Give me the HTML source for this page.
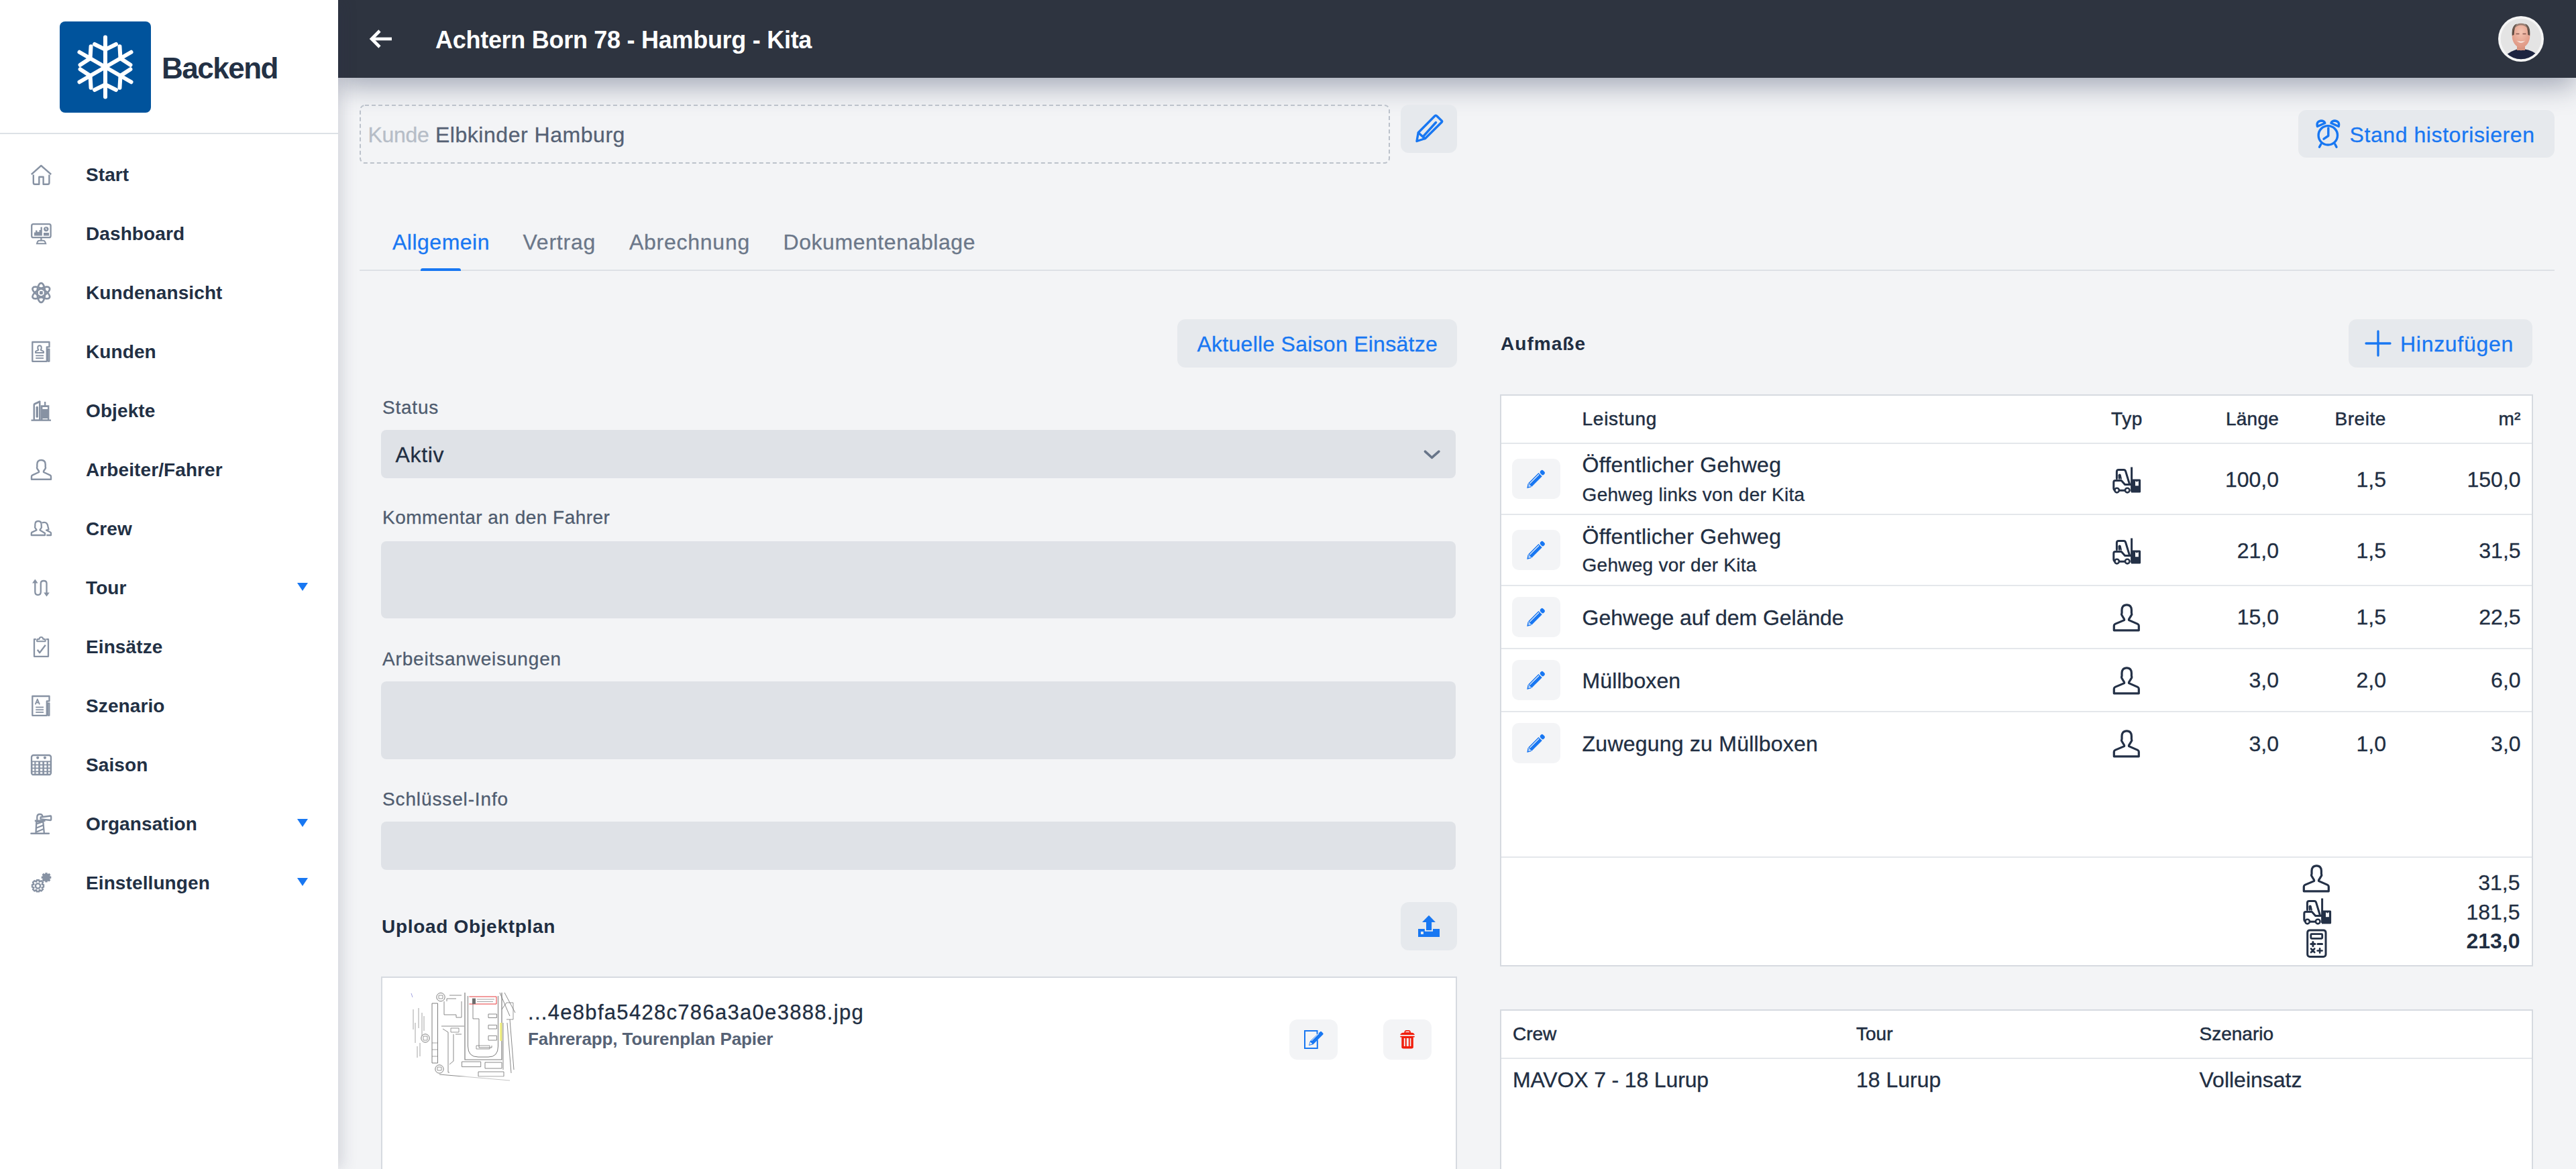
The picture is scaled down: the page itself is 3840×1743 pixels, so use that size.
<!DOCTYPE html>
<html><head><meta charset="utf-8">
<style>
*{box-sizing:border-box;margin:0;padding:0}
html,body{width:3840px;height:1743px;overflow:hidden;background:#f3f4f6;font-family:"Liberation Sans",sans-serif;color:#1f2a3c}
.a{position:absolute}
.t{position:absolute;line-height:1;white-space:nowrap}
#sb{position:absolute;left:0;top:0;width:504px;height:1743px;background:#fff;z-index:5;box-shadow:5px 0 22px rgba(40,50,80,.17)}
#hd{position:absolute;left:504px;top:0;width:3336px;height:116px;background:#2e3440;z-index:4;box-shadow:0 12px 40px rgba(40,52,85,.40)}
.nav{font-size:28px;font-weight:700;color:#223044;left:128px;letter-spacing:.1px}
.ic{position:absolute;left:36px;width:50px;height:50px}
.tri{position:absolute;left:443px;width:0;height:0;border-left:8.5px solid transparent;border-right:8.5px solid transparent;border-top:12px solid #1877f2}
.btn{position:absolute;background:#e6e9ed;border-radius:12px}
.inp{position:absolute;background:#dfe2e7;border-radius:8px;left:568px;width:1602px}
.lbl{font-size:28px;color:#4e5b6e;left:570px}
.blue{color:#1877f2}
</style></head>
<body>
<!-- SIDEBAR -->
<div id="sb">
  <div class="a" style="left:89px;top:32px;width:136px;height:136px;background:#00539c;border-radius:8px"></div>
  <svg class="a" style="left:89px;top:32px" width="136" height="136" viewBox="0 0 136 136">
    <g transform="translate(68,68)" stroke="#fff" stroke-width="6" stroke-linecap="round" fill="none">
      <g id="arm"><line x1="0" y1="0" x2="0" y2="-44.5"/><polyline points="-16,-34 0,-26 16,-34"/></g>
      <use href="#arm" transform="rotate(60)"/><use href="#arm" transform="rotate(120)"/><use href="#arm" transform="rotate(180)"/><use href="#arm" transform="rotate(240)"/><use href="#arm" transform="rotate(300)"/>
    </g>
  </svg>
  <div class="t" style="left:241px;top:79.5px;font-size:44px;font-weight:700;letter-spacing:-1.5px;color:#233145">Backend</div>
  <div class="a" style="left:0;top:198px;width:504px;height:2px;background:#dde1e6"></div>
  <!-- NAV -->
  <div class="t nav" style="top:246.8px">Start</div>
  <div class="t nav" style="top:334.8px">Dashboard</div>
  <div class="t nav" style="top:422.8px">Kundenansicht</div>
  <div class="t nav" style="top:510.8px">Kunden</div>
  <div class="t nav" style="top:598.8px">Objekte</div>
  <div class="t nav" style="top:686.8px">Arbeiter/Fahrer</div>
  <div class="t nav" style="top:774.8px">Crew</div>
  <div class="t nav" style="top:862.8px">Tour</div>
  <div class="t nav" style="top:950.8px">Einsätze</div>
  <div class="t nav" style="top:1038.8px">Szenario</div>
  <div class="t nav" style="top:1126.8px">Saison</div>
  <div class="t nav" style="top:1214.8px">Organsation</div>
  <div class="t nav" style="top:1302.8px">Einstellungen</div>
  <div class="tri" style="top:869px"></div>
  <div class="tri" style="top:1221px"></div>
  <div class="tri" style="top:1309px"></div>
  <svg class="ic" style="top:236px" viewBox="0 0 50 50"><g fill="none" stroke="#8792a3" stroke-width="2.4" stroke-linejoin="round"><path d="M10.8,24 L25.3,11 L40.2,24"/><path d="M13.8,24.5 V36.5 Q13.8,38.8 16,38.8 H22.3 V27.8 H28.6 V38.8 H35.2 Q37.4,38.8 37.4,36.5 V24.5"/></g></svg>
  <svg class="ic" style="top:324px" viewBox="0 0 50 50"><g fill="none" stroke="#8792a3" stroke-width="2.3"><rect x="11.2" y="10.2" width="28.4" height="20" rx="2.5"/><line x1="25.4" y1="30" x2="25.4" y2="35"/><path d="M19,39.2 Q20,34.8 22.5,34.8 H28.5 Q31,34.8 32.2,39.2 Z" stroke-width="2"/></g><g fill="#8792a3"><path d="M15,27.5 V22.5 H17 V19.5 H19.5 V21.8 H22.5 V19 H24.5 V14.5 H26.8 V27.5 Z"/><circle cx="32.8" cy="17.6" r="3.7"/><rect x="29" y="23" width="8" height="4.5"/></g><path d="M32.5,15.5 V18 H34" stroke="#fff" stroke-width="1" fill="none"/></svg>
  <svg class="ic" style="top:412px" viewBox="0 0 50 50"><g fill="none" stroke="#8792a3" stroke-width="2.7"><ellipse cx="25.3" cy="24.5" rx="5.8" ry="14.4"/><ellipse cx="25.3" cy="24.5" rx="5.8" ry="14.4" transform="rotate(60 25.3 24.5)"/><ellipse cx="25.3" cy="24.5" rx="5.8" ry="14.4" transform="rotate(-60 25.3 24.5)"/></g><rect x="23" y="22" width="4.8" height="5" rx="1" fill="#8792a3"/></svg>
  <svg class="ic" style="top:500px" viewBox="0 0 50 50"><g fill="none" stroke="#8792a3" stroke-width="2.3" stroke-linejoin="round"><path d="M12.3,10 H37.5 V17.3 H33.8 V38.8 H12.3 Z"/><path d="M35.6,20.5 H37.6 V38.8 H35.6 Z" stroke-width="1.8"/><path d="M23,15.2 Q20.4,15.2 20.3,17.8 V19.5 L21.3,21.8 L17.6,23.6 Q17,24 17,24.8 V26 H29 V24.8 Q29,24 28.3,23.6 L24.7,21.8 L25.7,19.5 V17.8 Q25.6,15.2 23,15.2 Z" stroke-width="2"/><line x1="17.2" y1="30.3" x2="29" y2="30.3" stroke-width="1.8"/><line x1="17.2" y1="34" x2="29" y2="34" stroke-width="1.8"/></g></svg>
  <svg class="ic" style="top:588px" viewBox="0 0 50 50"><g fill="#8792a3"><rect x="10.5" y="37.5" width="29.5" height="2.3"/><path d="M13.5,38 V15.5 Q13.5,13.5 15.5,12.8 L23,9.2 L24.5,10 V38 Z M16,37.5 H22 V13 L16,15.8 Z" fill-rule="evenodd"/><rect x="17.5" y="17.8" width="3.5" height="17" rx="1.5"/><path d="M24.5,16.3 H37.4 V38 H24.5 Z M27.4,19 V22 H35 V19 Z M27.5,36 V37.5 H35 V36 Z" fill-rule="evenodd"/><rect x="30" y="11" width="2.3" height="6"/></g></svg>
  <svg class="ic" style="top:676px" viewBox="0 0 50 50"><path d="M25.5,10 C21,10 19.3,13 19.3,16.5 V20.5 Q18.5,21.5 19.3,22.5 L22,26.5 V28 L12.5,32.3 Q11,33 11,34.5 V38.8 H40 V34.5 Q40,33 38.5,32.3 L29,28 V26.5 L31.7,22.5 Q32.5,21.5 31.7,20.5 V16.5 C31.7,13 30,10 25.5,10 Z" fill="none" stroke="#8792a3" stroke-width="2.4" stroke-linejoin="round"/></svg>
  <svg class="ic" style="top:764px" viewBox="0 0 50 50"><g fill="none" stroke="#8792a3" stroke-width="2.3" stroke-linejoin="round"><path d="M21,13 C17.5,13 16.3,15.5 16.3,18.3 V21 Q15.7,22 16.3,22.8 L18.4,25.8 V26.5 L11.7,29.6 Q10.8,30.1 10.8,31.2 V34 H31 V31 L23.6,26.5 V25.8 L25.7,22.8 Q26.3,22 25.7,21 V18.3 C25.7,15.5 24.5,13 21,13 Z"/><path d="M26.5,15.5 Q28,14.8 30,14.8 C33.5,14.8 35,17.5 35.5,21 L36.5,25.5 L33,26.5 L39,29.5 Q40,30 40,31 V34 H33.3"/></g></svg>
  <svg class="ic" style="top:852px" viewBox="0 0 50 50"><g fill="none" stroke="#8792a3" stroke-width="2.3" stroke-linejoin="round"><path d="M16.3,14 V30.5 Q16.3,35 20.5,35 Q24.8,35 24.8,30.5 V17.8 Q24.8,14 29.1,14 Q33.5,14 33.5,17.8 V35.5"/></g><g fill="#8792a3"><path d="M16.3,11.5 L12,17.5 H20.6 Z"/><path d="M33.5,37.5 L29.2,31.5 H37.8 Z"/></g></svg>
  <svg class="ic" style="top:940px" viewBox="0 0 50 50"><g fill="none" stroke="#8792a3" stroke-width="2.3" stroke-linejoin="round"><path d="M17.8,13.2 H15 V38.8 H36 V13.2 H32.8"/><path d="M19.8,13 H22.3 Q22.8,10 25.4,10 Q28,10 28.5,13 H31 Q31.5,13.5 31.5,14.5 V16.2 H19.2 V14.5 Q19.2,13.5 19.8,13 Z" stroke-width="2.1"/><polyline points="19.8,28.8 23.1,33.2 31.8,21.8"/></g></svg>
  <svg class="ic" style="top:1028px" viewBox="0 0 50 50"><g fill="none" stroke="#8792a3" stroke-width="2.3" stroke-linejoin="round"><path d="M12.3,10 H37.5 V17.3 H33.8 V38.8 H12.3 Z"/><path d="M35.6,20.5 H37.6 V38.8 H35.6 Z" stroke-width="1.8"/><path d="M16.6,22.3 L19.8,14.5 L23,22.3 M17.8,19.5 H21.8" stroke-width="1.8"/><line x1="17.2" y1="26.5" x2="29" y2="26.5" stroke-width="1.8"/><line x1="17.2" y1="30.3" x2="29" y2="30.3" stroke-width="1.8"/><line x1="17.2" y1="34" x2="29" y2="34" stroke-width="1.8"/></g></svg>
  <svg class="ic" style="top:1116px" viewBox="0 0 50 50"><rect x="11" y="10" width="29" height="29.2" rx="3" fill="none" stroke="#8792a3" stroke-width="2.3"/><path d="M11,18.6 H40 V36 Q40,39.2 37,39.2 H14 Q11,39.2 11,36 Z" fill="#8792a3"/><g fill="#fff"><rect x="12.5" y="20.3" width="2.8" height="3.2"/><rect x="17.4" y="20.3" width="3.8" height="3.2"/><rect x="23.9" y="20.3" width="3.4" height="3.2"/><rect x="29.9" y="20.3" width="3.6" height="3.2"/><rect x="35.9" y="20.3" width="2.6" height="3.2"/><rect x="12.5" y="25.3" width="2.8" height="3.2"/><rect x="17.4" y="25.3" width="3.8" height="3.2"/><rect x="23.9" y="25.3" width="3.4" height="3.2"/><rect x="29.9" y="25.3" width="3.6" height="3.2"/><rect x="35.9" y="25.3" width="2.6" height="3.2"/><rect x="12.5" y="30.3" width="2.8" height="3.2"/><rect x="17.4" y="30.3" width="3.8" height="3.2"/><rect x="23.9" y="30.3" width="3.4" height="3.2"/><rect x="29.9" y="30.3" width="3.6" height="3.2"/><rect x="35.9" y="30.3" width="2.6" height="3.2"/><rect x="12.5" y="35.3" width="2.8" height="2.4"/><rect x="17.4" y="35.3" width="3.8" height="2.4"/><rect x="23.9" y="35.3" width="3.4" height="2.4"/><rect x="29.9" y="35.3" width="3.6" height="2.4"/><rect x="35.9" y="35.3" width="2.6" height="2.4"/></g><g fill="#8792a3"><circle cx="20.2" cy="13.8" r="2.1"/><circle cx="30.9" cy="13.8" r="2.1"/></g></svg>
  <svg class="ic" style="top:1204px" viewBox="0 0 50 50"><g fill="none" stroke="#8792a3" stroke-width="2.3" stroke-linejoin="round"><line x1="10.5" y1="38.8" x2="36.8" y2="38.8" stroke-width="2.6" stroke-linecap="round"/><path d="M17.5,38 L18.3,21.3 H28.3 L29.8,38"/><path d="M15.8,19.8 H31.5" stroke-width="2.6"/><path d="M19.3,19.5 V14 Q19.5,10 23.3,10 Q27,10 27.5,13.3"/><path d="M24.5,14.5 L39.3,12.5 Q40.2,12.5 40.2,13.5 V18 Q40.2,19 39.3,19 L24.5,17.3 Z"/><path d="M18.5,24.5 L27.5,21.5 M18.3,30.5 L28.3,26.5 M18.2,36.5 L29,32"/></g></svg>
  <svg class="ic" style="top:1292px" viewBox="0 0 50 50"><g fill="none" stroke="#8792a3" stroke-width="2.4" stroke-linejoin="round"><path d="M18.8,20.3 H22.2 L22.8,22.8 L25.6,21.3 L28,23.7 L26.5,26.5 L29,27.2 V30.6 L26.5,31.3 L28,34 L25.6,36.4 L22.8,34.9 L22.2,37.4 H18.8 L18.2,34.9 L15.4,36.4 L13,34 L14.5,31.3 L12,30.6 V27.2 L14.5,26.5 L13,23.7 L15.4,21.3 L18.2,22.8 Z"/><circle cx="20.5" cy="29" r="3.6"/></g><path fill="#8792a3" d="M31.5,9.2 H34.5 L35,11.2 L37.3,10 L39.3,12 L38.1,14.3 L40.3,14.8 V17.8 L38.1,18.3 L39.3,20.6 L37.3,22.6 L35,21.4 L34.5,23.4 H31.5 L31,21.4 L28.7,22.6 L26.7,20.6 L27.9,18.3 L25.7,17.8 V14.8 L27.9,14.3 L26.7,12 L28.7,10 L31,11.2 Z"/></svg>
</div>
<!-- HEADER -->
<div id="hd">
  <svg class="a" style="left:44px;top:42px" width="40" height="32" viewBox="0 0 40 32">
    <g stroke="#fff" stroke-width="4.6" fill="none"><line x1="6" y1="16" x2="36" y2="16"/><polyline points="18,4 6,16 18,28"/></g>
  </svg>
</div>
<!--MAIN-->
<div id="mn" class="a" style="left:0;top:0;width:3840px;height:1743px;z-index:6">
<!-- avatar -->
<svg class="a" style="left:3722px;top:22px" width="72" height="72" viewBox="0 0 72 72">
  <defs><clipPath id="avc"><circle cx="36" cy="36" r="30.3"/></clipPath>
  <radialGradient id="fg" cx=".5" cy=".35" r=".6"><stop offset="0" stop-color="#f3c4b2"/><stop offset="1" stop-color="#e09a86"/></radialGradient></defs>
  <circle cx="36" cy="36" r="34" fill="#f5f5f5"/>
  <g clip-path="url(#avc)">
    <rect x="0" y="0" width="72" height="72" fill="#e4e4e4"/>
    <path d="M8,68 Q14,57 26,53 L30,51.5 Q36,55 42,51.5 L47,52.5 Q58,56 64,64 L66,72 H6 Z" fill="#1d2440"/>
    <rect x="30" y="45" width="12" height="8" fill="#d99580"/>
    <ellipse cx="36" cy="31" rx="13.3" ry="18" fill="url(#fg)"/>
    <path d="M22.8,31 Q21.5,16 30,13.5 Q26,18 25.5,30 Z M49.2,31 Q50.5,16 42,13.5 Q46,18 46.5,30 Z" fill="#5b4a40"/>
    <path d="M22.8,29 Q23,13 36,12.8 Q49,13 49.2,29 Q47,16 36,15.5 Q25,16 22.8,29 Z" fill="#7a6a60" opacity=".7"/>
    <path d="M29.5,38.5 Q36,44.5 42.5,38.5 Q36,41.5 29.5,38.5 Z" fill="#fff"/>
    <path d="M28.5,28.5 h5 M38.5,28.5 h5" stroke="#8a5a50" stroke-width="1.3"/>
  </g>
</svg>
<!-- kunde field -->
<svg class="a" style="left:536px;top:156px" width="1537" height="88"><rect x="1" y="1" width="1534" height="86" rx="7" fill="none" stroke="#bcc2cb" stroke-width="2" stroke-dasharray="6 4"/></svg>
<div class="btn" style="left:2088px;top:156px;width:84px;height:72px"></div>
<svg class="a" style="left:2100px;top:160px" width="60" height="60" viewBox="0 0 60 60"><g fill="none" stroke="#1877f2" stroke-width="3.4" stroke-linejoin="round" stroke-linecap="round"><path d="M41.6,12.8 L49.3,20.2 Q50.2,21.1 49.3,22 L24.5,46.5 L12,50.5 L14.2,37.8 L39,12.8 Q40.2,11.8 41.6,12.8 Z"/><line x1="14.5" y1="38" x2="23.8" y2="46.5"/><line x1="22" y1="43" x2="40.5" y2="22.5"/></g></svg>
<div class="btn" style="left:3426px;top:164px;width:382px;height:71px"></div>
<svg class="a" style="left:3440px;top:170px" width="60" height="60" viewBox="0 0 60 60"><g fill="none" stroke="#1877f2" stroke-width="3.4" stroke-linecap="round" stroke-linejoin="round"><circle cx="30.3" cy="31.8" r="14.2"/><polyline points="30.8,21 30.8,32.5 24,37.2"/><line x1="19.8" y1="45" x2="17.5" y2="49.2"/><line x1="40.8" y1="45" x2="43" y2="49.2"/><path d="M14.5,18.5 Q12.5,11 20,10 Q24.5,10 25.8,13.5 Z"/><path d="M46.2,18.5 Q48.2,11 40.7,10 Q36.2,10 34.9,13.5 Z"/></g></svg>
<!-- tabs -->
<div class="a" style="left:536px;top:402px;width:3272px;height:2px;background:#dde1e6"></div>
<div class="a" style="left:627px;top:400px;width:60px;height:4px;background:#1877f2;border-radius:3px 3px 0 0"></div>
<!-- left column -->
<div class="btn" style="left:1755px;top:476px;width:417px;height:72px"></div>
<div class="inp" style="top:641px;height:72px"></div>
<svg class="a" style="left:2110px;top:650px" width="50" height="50"><polyline points="14.4,23.1 24.4,32.3 34.9,23.1" fill="none" stroke="#687589" stroke-width="3.6" stroke-linecap="round" stroke-linejoin="round"/></svg>
<div class="inp" style="top:807px;height:115px"></div>
<div class="inp" style="top:1016px;height:116px"></div>
<div class="inp" style="top:1225px;height:72px"></div>
<div class="btn" style="left:2088px;top:1345px;width:84px;height:72px"></div>
<svg class="a" style="left:2105px;top:1355px" width="50" height="50" viewBox="0 0 50 50"><path fill="#1877f2" fill-rule="evenodd" d="M25,9.8 L34.9,19.9 H29.1 V31.9 H21 V19.9 H15 Z M9,30 H18.8 V33.8 H31 V30 H41 V41.9 H9 Z M13,34 V37.9 H16.9 V34 Z"/></svg>
<div class="a" style="left:568px;top:1456px;width:1604px;height:300px;background:#fff;border:2px solid #d6dae0"></div>
<svg class="a" style="left:610px;top:1475px" width="160" height="140" viewBox="0 0 160 140">
<rect x="0" y="0" width="160" height="140" fill="#fff"/>
<g fill="none" stroke="#7d7d7d" stroke-width="1">
<circle cx="47" cy="11.7" r="6.2"/><circle cx="24" cy="73" r="6.2"/><circle cx="45" cy="119" r="6.2"/>
<path d="M44,9 h6 v5 h-6 z M21,70 h6 v6 h-6 z M42,116 h6 v5 h-6z" stroke-width=".8"/>
<path d="M34,21 H42.5 V110 H34 Z" />
<path d="M34,80 H42.5 M34,90 H42.5 M34,100 H42.5" stroke-width=".7"/>
<path d="M6,30 V60 M9,50 V80 M14,28 V58 M19,35 V70 M22,40 V62 M12,85 V102 M16,80 V100" stroke="#9a9a9a" stroke-width=".9"/>
<path d="M83,5 V105 H138 V5" stroke-width="1.2"/>
<path d="M87.5,10 V85 Q87.5,101 103,101 H118 Q132.5,101 132.5,85 V10" stroke-width="1"/>
<path d="M95,22 V44 H104 V87 H123 V84" stroke-width=".9"/>
<path d="M118,37 h12.5 v5.5 h-12.5z M118,53.4 h12.5 v5.6 h-12.5z M118,69.4 h12.5 v6.6 h-12.5z" stroke-width=".9"/>
<path d="M100,84 h20 v5 h-20z" stroke-width=".8"/>
<path d="M52,18 V38 H70 V42 H78 V18 M60,9 H78 M56,18 V14 H70" stroke-width=".9"/>
<path d="M48,55 H82 M50,59 L58,64 V124 H60 M66,67 V107 L60,112 M69,67 H78" stroke-width=".9"/>
<path d="M62,58 h12 v6 h-12z" stroke-width=".8"/>
<path d="M78.5,108 H106.7 V115.6 H78.5 Z M113,109 H138 V118 H113 Z M103,123 H141 V130 H103 Z" stroke-width=".9"/>
<path d="M45,127 L150,136" stroke-width=".9"/>
<path d="M135,5 L150,40 M142,5 L158,35 M138,30 L145,20 M140,50 V120 M146,50 L152,125 M150,45 L156,120" stroke-width=".9"/>
<path d="M145,20 h10 v25 h-10" stroke-width=".8"/>
</g>
<path d="M89.4,11 H130 V22 H89.4" fill="none" stroke="#e5393b" stroke-width="1"/>
<rect x="94" y="13.6" width="5" height="8.4" fill="#6e6e6e"/>
<path d="M101,15 H127 M101,18.5 H125" stroke="#888" stroke-width=".8"/>
<rect x="135" y="50" width="3.5" height="27" fill="#f1f07a" opacity=".9"/>
<path d="M3,6 L5,12" stroke="#8b8bd8" stroke-width=".8"/>
<rect x="0" y="130" width="160" height="10" fill="#fff" opacity=".5"/>
</svg>

<div class="btn" style="left:1922px;top:1520px;width:72px;height:60px;background:#f3f4f6"></div>
<svg class="a" style="left:1935px;top:1525px" width="50" height="50" viewBox="0 0 50 50"><g fill="none" stroke="#1877f2" stroke-width="2"><path d="M28.5,16.8 V11.9 H10 V38 H28.8 V25.5"/></g><path fill="#1877f2" d="M33,13.3 Q34,12.3 35,13.3 L37.2,15.5 Q38.2,16.5 37.2,17.5 L22.5,32.2 L16,34 L17.8,27.5 Z"/><path fill="#f3f4f6" d="M18.3,28.6 L21.3,31.6 L17.2,32.8 Z"/><path stroke="#f3f4f6" stroke-width="1" d="M20,27 L31,16"/></svg>
<div class="btn" style="left:2062px;top:1520px;width:72px;height:60px;background:#f3f4f6"></div>
<svg class="a" style="left:2073px;top:1525px" width="50" height="50" viewBox="0 0 50 50"><g fill="#f11e0c"><path d="M20.3,15 Q20.3,11 23.5,11 H26.8 Q30,11 30,15 Z M22,14.3 H28.3 Q28.3,12.8 26.8,12.8 H23.5 Q22,12.8 22,14.3 Z" fill-rule="evenodd"/><path d="M14.2,18 Q15,15 19,14.8 H31.3 Q35.3,15 35.8,18 Z"/><rect x="14.2" y="19.8" width="21.6" height="1.8" rx=".9"/><path fill-rule="evenodd" d="M16.3,21 H33.8 V36.8 Q33.8,38.6 31,38.6 H19 Q16.3,38.6 16.3,36.8 Z M19.8,23 V35 H21.7 V23 Z M23.8,23 V35 H26.8 V23 Z M28.7,23 V35 H30.4 V23 Z"/></g></svg>
<!-- right column -->
<div class="btn" style="left:3501px;top:476px;width:274px;height:72px"></div>
<svg class="a" style="left:3522px;top:489px" width="46" height="46"><g stroke="#1877f2" stroke-width="3.3" stroke-linecap="round"><line x1="23" y1="5" x2="23" y2="41"/><line x1="5" y1="23" x2="41" y2="23"/></g></svg>
<div class="a" style="left:2236px;top:588px;width:1540px;height:853px;background:#fff;border:2px solid #d6dae0"></div>
<div class="a" style="left:2238px;top:660px;width:1536px;height:2px;background:#e4e7eb"></div>
<div class="a" style="left:2238px;top:766px;width:1536px;height:2px;background:#e4e7eb"></div>
<div class="a" style="left:2238px;top:872px;width:1536px;height:2px;background:#e4e7eb"></div>
<div class="a" style="left:2238px;top:966px;width:1536px;height:2px;background:#e4e7eb"></div>
<div class="a" style="left:2238px;top:1060px;width:1536px;height:2px;background:#e4e7eb"></div>
<div class="a" style="left:2238px;top:1277px;width:1536px;height:2px;background:#e4e7eb"></div>
<div class="btn" style="left:2254px;top:684px;width:72px;height:60px;background:#f3f4f6;border-radius:10px"></div><svg class="a" style="left:2260px;top:690px" width="60" height="50" viewBox="0 0 60 50"><g transform="translate(28.65,25.2) rotate(-45)" fill="#1877f2"><path d="M-17.8,0.3 L-12,-3.7 V3.7 Z"/><path fill="#f3f4f6" d="M-14.6,0.2 L-12.3,-1.9 V2.1 Z"/><rect x="-11.2" y="-3.7" width="21.8" height="7.4"/><rect x="-10" y="-2.3" width="19.5" height="1.1" fill="#f3f4f6"/><rect x="12" y="-3.7" width="6" height="7.4" rx="2.6"/></g></svg>
<div class="btn" style="left:2254px;top:790px;width:72px;height:60px;background:#f3f4f6;border-radius:10px"></div><svg class="a" style="left:2260px;top:796px" width="60" height="50" viewBox="0 0 60 50"><g transform="translate(28.65,25.2) rotate(-45)" fill="#1877f2"><path d="M-17.8,0.3 L-12,-3.7 V3.7 Z"/><path fill="#f3f4f6" d="M-14.6,0.2 L-12.3,-1.9 V2.1 Z"/><rect x="-11.2" y="-3.7" width="21.8" height="7.4"/><rect x="-10" y="-2.3" width="19.5" height="1.1" fill="#f3f4f6"/><rect x="12" y="-3.7" width="6" height="7.4" rx="2.6"/></g></svg>
<div class="btn" style="left:2254px;top:890px;width:72px;height:60px;background:#f3f4f6;border-radius:10px"></div><svg class="a" style="left:2260px;top:896px" width="60" height="50" viewBox="0 0 60 50"><g transform="translate(28.65,25.2) rotate(-45)" fill="#1877f2"><path d="M-17.8,0.3 L-12,-3.7 V3.7 Z"/><path fill="#f3f4f6" d="M-14.6,0.2 L-12.3,-1.9 V2.1 Z"/><rect x="-11.2" y="-3.7" width="21.8" height="7.4"/><rect x="-10" y="-2.3" width="19.5" height="1.1" fill="#f3f4f6"/><rect x="12" y="-3.7" width="6" height="7.4" rx="2.6"/></g></svg>
<div class="btn" style="left:2254px;top:984px;width:72px;height:60px;background:#f3f4f6;border-radius:10px"></div><svg class="a" style="left:2260px;top:990px" width="60" height="50" viewBox="0 0 60 50"><g transform="translate(28.65,25.2) rotate(-45)" fill="#1877f2"><path d="M-17.8,0.3 L-12,-3.7 V3.7 Z"/><path fill="#f3f4f6" d="M-14.6,0.2 L-12.3,-1.9 V2.1 Z"/><rect x="-11.2" y="-3.7" width="21.8" height="7.4"/><rect x="-10" y="-2.3" width="19.5" height="1.1" fill="#f3f4f6"/><rect x="12" y="-3.7" width="6" height="7.4" rx="2.6"/></g></svg>
<div class="btn" style="left:2254px;top:1078px;width:72px;height:60px;background:#f3f4f6;border-radius:10px"></div><svg class="a" style="left:2260px;top:1084px" width="60" height="50" viewBox="0 0 60 50"><g transform="translate(28.65,25.2) rotate(-45)" fill="#1877f2"><path d="M-17.8,0.3 L-12,-3.7 V3.7 Z"/><path fill="#f3f4f6" d="M-14.6,0.2 L-12.3,-1.9 V2.1 Z"/><rect x="-11.2" y="-3.7" width="21.8" height="7.4"/><rect x="-10" y="-2.3" width="19.5" height="1.1" fill="#f3f4f6"/><rect x="12" y="-3.7" width="6" height="7.4" rx="2.6"/></g></svg>
<svg class="a" style="left:3140.0px;top:690.0px" width="60" height="50" viewBox="0 0 60 50"><g fill="none" stroke="#243147" stroke-width="3" stroke-linejoin="round" stroke-linecap="round"><line x1="37.6" y1="6.5" x2="37.6" y2="43" stroke-linecap="butt"/><path d="M15.4,23.5 V13.3 Q15.4,10.4 18.3,10.4 H25.8 Q28,10.4 28.7,12.8 L34.3,31.3"/><path d="M19,23.5 L18.7,18.5 Q19.5,17 20.5,18.3 L21.7,23.5" stroke-width="2.4"/><path d="M36.5,32.6 H27.6 L22.3,26.6 H13.3 Q10.8,26.6 10.8,29.3 V38.2 Q10.8,40 12.2,40.6"/><line x1="19.5" y1="41.2" x2="27.5" y2="41.2"/><circle cx="15.6" cy="41.1" r="3.3" stroke-width="2.6"/><circle cx="31.2" cy="41.1" r="3.3" stroke-width="2.6"/></g><path fill="#243147" fill-rule="evenodd" d="M37,24.5 H49.6 Q51.1,24.5 51.1,26 V43 Q51.1,44.5 49.6,44.5 H37 Z M43,27.4 V34.2 H47.9 V27.4 H46.6 L45.4,28.8 L44.2,27.4 Z"/></svg>
<svg class="a" style="left:3140.0px;top:796.0px" width="60" height="50" viewBox="0 0 60 50"><g fill="none" stroke="#243147" stroke-width="3" stroke-linejoin="round" stroke-linecap="round"><line x1="37.6" y1="6.5" x2="37.6" y2="43" stroke-linecap="butt"/><path d="M15.4,23.5 V13.3 Q15.4,10.4 18.3,10.4 H25.8 Q28,10.4 28.7,12.8 L34.3,31.3"/><path d="M19,23.5 L18.7,18.5 Q19.5,17 20.5,18.3 L21.7,23.5" stroke-width="2.4"/><path d="M36.5,32.6 H27.6 L22.3,26.6 H13.3 Q10.8,26.6 10.8,29.3 V38.2 Q10.8,40 12.2,40.6"/><line x1="19.5" y1="41.2" x2="27.5" y2="41.2"/><circle cx="15.6" cy="41.1" r="3.3" stroke-width="2.6"/><circle cx="31.2" cy="41.1" r="3.3" stroke-width="2.6"/></g><path fill="#243147" fill-rule="evenodd" d="M37,24.5 H49.6 Q51.1,24.5 51.1,26 V43 Q51.1,44.5 49.6,44.5 H37 Z M43,27.4 V34.2 H47.9 V27.4 H46.6 L45.4,28.8 L44.2,27.4 Z"/></svg>
<svg class="a" style="left:3140.0px;top:890.0px" width="60" height="55" viewBox="0 0 60 55"><path d="M30.3,11.9 C25.2,11.9 23,15.3 23,19.5 V24 Q22.2,25.5 23,27.2 L26.6,33.3 V34.6 L13,40.4 Q11.3,41.2 11.3,43 V49.8 H48.3 V43 Q48.3,41.2 46.6,40.4 L33.5,34.6 V33.3 L37.3,27.2 Q38.2,25.5 37.4,24 V19.5 C37.4,15.3 35.4,11.9 30.3,11.9 Z" fill="none" stroke="#243147" stroke-width="3.2" stroke-linejoin="round"/></svg>
<svg class="a" style="left:3140.0px;top:984.0px" width="60" height="55" viewBox="0 0 60 55"><path d="M30.3,11.9 C25.2,11.9 23,15.3 23,19.5 V24 Q22.2,25.5 23,27.2 L26.6,33.3 V34.6 L13,40.4 Q11.3,41.2 11.3,43 V49.8 H48.3 V43 Q48.3,41.2 46.6,40.4 L33.5,34.6 V33.3 L37.3,27.2 Q38.2,25.5 37.4,24 V19.5 C37.4,15.3 35.4,11.9 30.3,11.9 Z" fill="none" stroke="#243147" stroke-width="3.2" stroke-linejoin="round"/></svg>
<svg class="a" style="left:3140.0px;top:1078.0px" width="60" height="55" viewBox="0 0 60 55"><path d="M30.3,11.9 C25.2,11.9 23,15.3 23,19.5 V24 Q22.2,25.5 23,27.2 L26.6,33.3 V34.6 L13,40.4 Q11.3,41.2 11.3,43 V49.8 H48.3 V43 Q48.3,41.2 46.6,40.4 L33.5,34.6 V33.3 L37.3,27.2 Q38.2,25.5 37.4,24 V19.5 C37.4,15.3 35.4,11.9 30.3,11.9 Z" fill="none" stroke="#243147" stroke-width="3.2" stroke-linejoin="round"/></svg>
<svg class="a" style="left:3423.0px;top:1279.4px" width="60" height="55" viewBox="0 0 60 55"><path d="M30.3,11.9 C25.2,11.9 23,15.3 23,19.5 V24 Q22.2,25.5 23,27.2 L26.6,33.3 V34.6 L13,40.4 Q11.3,41.2 11.3,43 V49.8 H48.3 V43 Q48.3,41.2 46.6,40.4 L33.5,34.6 V33.3 L37.3,27.2 Q38.2,25.5 37.4,24 V19.5 C37.4,15.3 35.4,11.9 30.3,11.9 Z" fill="none" stroke="#243147" stroke-width="3.2" stroke-linejoin="round"/></svg>
<svg class="a" style="left:3424.0px;top:1333.4px" width="60" height="50" viewBox="0 0 60 50"><g fill="none" stroke="#243147" stroke-width="3" stroke-linejoin="round" stroke-linecap="round"><line x1="37.6" y1="6.5" x2="37.6" y2="43" stroke-linecap="butt"/><path d="M15.4,23.5 V13.3 Q15.4,10.4 18.3,10.4 H25.8 Q28,10.4 28.7,12.8 L34.3,31.3"/><path d="M19,23.5 L18.7,18.5 Q19.5,17 20.5,18.3 L21.7,23.5" stroke-width="2.4"/><path d="M36.5,32.6 H27.6 L22.3,26.6 H13.3 Q10.8,26.6 10.8,29.3 V38.2 Q10.8,40 12.2,40.6"/><line x1="19.5" y1="41.2" x2="27.5" y2="41.2"/><circle cx="15.6" cy="41.1" r="3.3" stroke-width="2.6"/><circle cx="31.2" cy="41.1" r="3.3" stroke-width="2.6"/></g><path fill="#243147" fill-rule="evenodd" d="M37,24.5 H49.6 Q51.1,24.5 51.1,26 V43 Q51.1,44.5 49.6,44.5 H37 Z M43,27.4 V34.2 H47.9 V27.4 H46.6 L45.4,28.8 L44.2,27.4 Z"/></svg>
<svg class="a" style="left:3425.0px;top:1380.0px" width="60" height="55" viewBox="0 0 60 55"><g fill="none" stroke="#243147" stroke-width="3" stroke-linecap="round"><rect x="14.7" y="6.9" width="27.3" height="39.6" rx="3.5"/><rect x="19.8" y="12.7" width="16.9" height="6.6" rx="1" stroke-width="2.8"/><path d="M19.8,27.6 H26 M22.9,24.5 V30.7 M30,27.6 H36.6"/><path d="M20,34.5 L25.3,40 M25.3,34.5 L20,40 M29.6,37.5 H36.6 M33.1,34.2 V40.6" stroke-width="2.6"/></g></svg>
<div class="a" style="left:2236px;top:1505px;width:1540px;height:300px;background:#fff;border:2px solid #d6dae0"></div>
<div class="a" style="left:2238px;top:1577px;width:1536px;height:2px;background:#e4e7eb"></div>
<div class="t" style="left:649.0px;top:41.7px;font-size:36px;color:#ffffff;font-weight:700;letter-spacing:-0.28px">Achtern Born 78 - Hamburg - Kita</div>
<div class="t" style="left:548.5px;top:184.9px;font-size:32px;color:#b6bdc7;letter-spacing:-0.31px;-webkit-text-stroke:.3px #b6bdc7">Kunde</div>
<div class="t" style="left:649.0px;top:184.9px;font-size:32px;color:#556174;letter-spacing:0.53px;-webkit-text-stroke:.3px #556174">Elbkinder Hamburg</div>
<div class="t" style="left:585.0px;top:344.9px;font-size:32px;color:#1877f2;letter-spacing:0.50px;-webkit-text-stroke:.3px #1877f2">Allgemein</div>
<div class="t" style="left:779.5px;top:344.9px;font-size:32px;color:#6b7789;letter-spacing:0.76px;-webkit-text-stroke:.3px #6b7789">Vertrag</div>
<div class="t" style="left:938.0px;top:344.9px;font-size:32px;color:#6b7789;letter-spacing:0.74px;-webkit-text-stroke:.3px #6b7789">Abrechnung</div>
<div class="t" style="left:1167.5px;top:344.9px;font-size:32px;color:#6b7789;letter-spacing:0.56px;-webkit-text-stroke:.3px #6b7789">Dokumentenablage</div>
<div class="t" style="left:1784.5px;top:496.9px;font-size:32px;color:#1877f2;letter-spacing:0.26px;-webkit-text-stroke:.3px #1877f2">Aktuelle Saison Einsätze</div>
<div class="t" style="left:3502.5px;top:185.1px;font-size:32px;color:#1877f2;letter-spacing:0.58px;-webkit-text-stroke:.3px #1877f2">Stand historisieren</div>
<div class="t" style="left:3578.0px;top:496.7px;font-size:32px;color:#1877f2;letter-spacing:0.71px;-webkit-text-stroke:.3px #1877f2">Hinzufügen</div>
<div class="t" style="left:570.0px;top:593.8px;font-size:28px;color:#4f5c6f;letter-spacing:0.77px;-webkit-text-stroke:.3px #4f5c6f">Status</div>
<div class="t" style="left:589.6px;top:661.9px;font-size:32px;color:#212e42;letter-spacing:0.63px;-webkit-text-stroke:.3px #212e42">Aktiv</div>
<div class="t" style="left:570.0px;top:758.3px;font-size:28px;color:#4f5c6f;letter-spacing:0.48px;-webkit-text-stroke:.3px #4f5c6f">Kommentar an den Fahrer</div>
<div class="t" style="left:570.0px;top:969.3px;font-size:28px;color:#4f5c6f;letter-spacing:0.82px;-webkit-text-stroke:.3px #4f5c6f">Arbeitsanweisungen</div>
<div class="t" style="left:570.0px;top:1178.0px;font-size:28px;color:#4f5c6f;letter-spacing:0.87px;-webkit-text-stroke:.3px #4f5c6f">Schlüssel-Info</div>
<div class="t" style="left:569.0px;top:1367.9px;font-size:28px;color:#212e42;font-weight:700;letter-spacing:0.68px">Upload Objektplan</div>
<div class="t" style="left:787.0px;top:1493.8px;font-size:31px;color:#212e42;letter-spacing:1.30px;-webkit-text-stroke:.3px #212e42">...4e8bfa5428c786a3a0e3888.jpg</div>
<div class="t" style="left:787.0px;top:1535.9px;font-size:26px;color:#566275;font-weight:700;letter-spacing:-0.09px">Fahrerapp, Tourenplan Papier</div>
<div class="t" style="left:2237.0px;top:498.8px;font-size:28px;color:#212e42;font-weight:700;letter-spacing:1.03px">Aufmaße</div>
<div class="t" style="left:2358.6px;top:611.3px;font-size:28px;color:#212e42;letter-spacing:0.70px;-webkit-text-stroke:.5px #212e42">Leistung</div>
<div class="t" style="left:3147.0px;top:611.3px;font-size:28px;color:#212e42;letter-spacing:0.62px;-webkit-text-stroke:.5px #212e42">Typ</div>
<div class="t" style="left:3318.0px;top:611.3px;font-size:28px;color:#212e42;letter-spacing:0.23px;-webkit-text-stroke:.5px #212e42">Länge</div>
<div class="t" style="left:3480.4px;top:611.3px;font-size:28px;color:#212e42;letter-spacing:0.57px;-webkit-text-stroke:.5px #212e42">Breite</div>
<div class="t" style="left:3724.6px;top:611.3px;font-size:28px;color:#212e42;letter-spacing:0.17px;-webkit-text-stroke:.5px #212e42">m²</div>
<div class="t" style="left:2358.6px;top:676.9px;font-size:32px;color:#212e42;letter-spacing:0.29px;-webkit-text-stroke:.3px #212e42">Öffentlicher Gehweg</div>
<div class="t" style="left:2358.6px;top:724.3px;font-size:28px;color:#212e42;letter-spacing:0.26px;-webkit-text-stroke:.3px #212e42">Gehweg links von der Kita</div>
<div class="t" style="left:3316.9px;top:698.7px;font-size:32px;color:#212e42;-webkit-text-stroke:.3px #212e42">100,0</div>
<div class="t" style="left:3512.5px;top:698.7px;font-size:32px;color:#212e42;-webkit-text-stroke:.3px #212e42">1,5</div>
<div class="t" style="left:3677.5px;top:698.7px;font-size:32px;color:#212e42;-webkit-text-stroke:.3px #212e42">150,0</div>
<div class="t" style="left:2358.6px;top:783.5px;font-size:32px;color:#212e42;letter-spacing:0.29px;-webkit-text-stroke:.3px #212e42">Öffentlicher Gehweg</div>
<div class="t" style="left:2358.6px;top:829.3px;font-size:28px;color:#212e42;letter-spacing:0.25px;-webkit-text-stroke:.3px #212e42">Gehweg vor der Kita</div>
<div class="t" style="left:3334.7px;top:804.8px;font-size:32px;color:#212e42;-webkit-text-stroke:.3px #212e42">21,0</div>
<div class="t" style="left:3512.5px;top:804.8px;font-size:32px;color:#212e42;-webkit-text-stroke:.3px #212e42">1,5</div>
<div class="t" style="left:3695.3px;top:804.8px;font-size:32px;color:#212e42;-webkit-text-stroke:.3px #212e42">31,5</div>
<div class="t" style="left:2358.6px;top:904.9px;font-size:32px;color:#212e42;letter-spacing:-0.06px;-webkit-text-stroke:.3px #212e42">Gehwege auf dem Gelände</div>
<div class="t" style="left:3334.7px;top:903.9px;font-size:32px;color:#212e42;-webkit-text-stroke:.3px #212e42">15,0</div>
<div class="t" style="left:3512.5px;top:903.9px;font-size:32px;color:#212e42;-webkit-text-stroke:.3px #212e42">1,5</div>
<div class="t" style="left:3695.3px;top:903.9px;font-size:32px;color:#212e42;-webkit-text-stroke:.3px #212e42">22,5</div>
<div class="t" style="left:2358.6px;top:998.9px;font-size:32px;color:#212e42;letter-spacing:0.08px;-webkit-text-stroke:.3px #212e42">Müllboxen</div>
<div class="t" style="left:3352.5px;top:997.9px;font-size:32px;color:#212e42;-webkit-text-stroke:.3px #212e42">3,0</div>
<div class="t" style="left:3512.5px;top:997.9px;font-size:32px;color:#212e42;-webkit-text-stroke:.3px #212e42">2,0</div>
<div class="t" style="left:3713.1px;top:997.9px;font-size:32px;color:#212e42;-webkit-text-stroke:.3px #212e42">6,0</div>
<div class="t" style="left:2358.6px;top:1092.9px;font-size:32px;color:#212e42;letter-spacing:0.22px;-webkit-text-stroke:.3px #212e42">Zuwegung zu Müllboxen</div>
<div class="t" style="left:3352.5px;top:1092.9px;font-size:32px;color:#212e42;-webkit-text-stroke:.3px #212e42">3,0</div>
<div class="t" style="left:3512.5px;top:1092.9px;font-size:32px;color:#212e42;-webkit-text-stroke:.3px #212e42">1,0</div>
<div class="t" style="left:3713.1px;top:1092.9px;font-size:32px;color:#212e42;-webkit-text-stroke:.3px #212e42">3,0</div>
<div class="t" style="left:3694.2px;top:1299.9px;font-size:32px;color:#212e42;-webkit-text-stroke:.3px #212e42">31,5</div>
<div class="t" style="left:3676.4px;top:1343.6px;font-size:32px;color:#212e42;-webkit-text-stroke:.3px #212e42">181,5</div>
<div class="t" style="left:3676.4px;top:1387.4px;font-size:32px;color:#212e42;font-weight:700">213,0</div>
<div class="t" style="left:2255.0px;top:1528.3px;font-size:28px;color:#212e42;-webkit-text-stroke:.5px #212e42">Crew</div>
<div class="t" style="left:2255.0px;top:1593.9px;font-size:32px;color:#212e42;letter-spacing:-0.15px;-webkit-text-stroke:.3px #212e42">MAVOX 7 - 18 Lurup</div>
<div class="t" style="left:2767.0px;top:1528.3px;font-size:28px;color:#212e42;-webkit-text-stroke:.5px #212e42">Tour</div>
<div class="t" style="left:2767.0px;top:1593.9px;font-size:32px;color:#212e42;-webkit-text-stroke:.3px #212e42">18 Lurup</div>
<div class="t" style="left:3278.5px;top:1528.3px;font-size:28px;color:#212e42;-webkit-text-stroke:.5px #212e42">Szenario</div>
<div class="t" style="left:3278.5px;top:1593.9px;font-size:32px;color:#212e42;-webkit-text-stroke:.3px #212e42">Volleinsatz</div>
</div>

</body></html>
